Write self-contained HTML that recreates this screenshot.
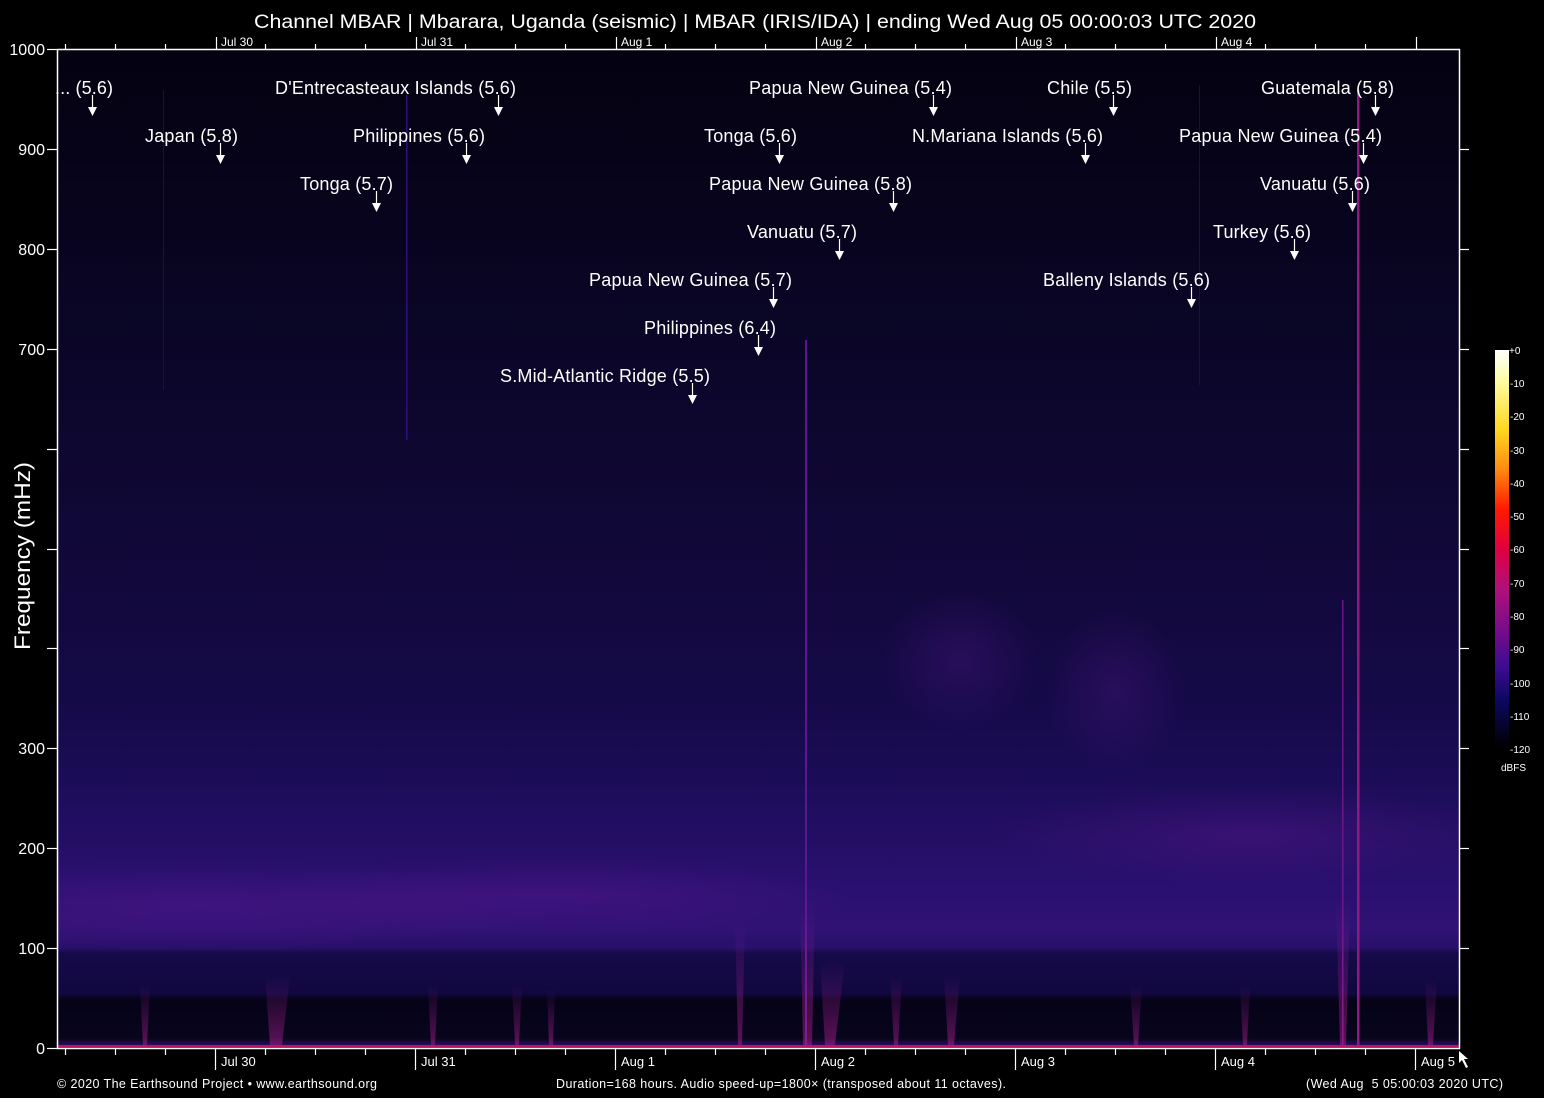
<!DOCTYPE html>
<html><head><meta charset="utf-8"><style>
html,body{margin:0;padding:0;background:#000;}
svg{display:block;}
text{font-family:"Liberation Sans",Arial,sans-serif;fill:#fff;}
</style></head><body>
<svg width="1544" height="1098" viewBox="0 0 1544 1098" xmlns="http://www.w3.org/2000/svg">
<defs>
<clipPath id="pc"><rect x="57" y="49" width="1402" height="999"/></clipPath>
<linearGradient id="bg" x1="0" y1="49" x2="0" y2="1048" gradientUnits="userSpaceOnUse">
<stop offset="0" stop-color="#040210"/>
<stop offset="0.1" stop-color="#060318"/>
<stop offset="0.3" stop-color="#0b0628"/>
<stop offset="0.5" stop-color="#110838"/>
<stop offset="0.65" stop-color="#150a48"/>
<stop offset="0.72" stop-color="#1a0c55"/>
<stop offset="0.78" stop-color="#220e62"/>
<stop offset="0.84" stop-color="#2a1070"/>
<stop offset="0.88" stop-color="#301274"/>
<stop offset="0.9" stop-color="#28106a"/>
<stop offset="0.905" stop-color="#150a48"/>
<stop offset="0.945" stop-color="#120840"/>
<stop offset="0.952" stop-color="#060318"/>
<stop offset="0.99" stop-color="#07041c"/>
<stop offset="1" stop-color="#3a1070"/>
</linearGradient>
<radialGradient id="pb" cx="0.5" cy="0.5" r="0.5">
<stop offset="0" stop-color="#6a1a98" stop-opacity="0.3"/>
<stop offset="1" stop-color="#6a1a98" stop-opacity="0"/>
</radialGradient>
<radialGradient id="blob" cx="0.5" cy="0.5" r="0.5">
<stop offset="0" stop-color="#5a1890" stop-opacity="0.3"/>
<stop offset="1" stop-color="#5a1890" stop-opacity="0"/>
</radialGradient>
<linearGradient id="cb" x1="0" y1="350" x2="0" y2="748" gradientUnits="userSpaceOnUse">
<stop offset="0" stop-color="#ffffff"/>
<stop offset="0.08" stop-color="#fffca0"/>
<stop offset="0.2" stop-color="#ffd820"/>
<stop offset="0.3" stop-color="#ff8a10"/>
<stop offset="0.4" stop-color="#ff1a00"/>
<stop offset="0.5" stop-color="#e00040"/>
<stop offset="0.6" stop-color="#b0107a"/>
<stop offset="0.7" stop-color="#7a0c8a"/>
<stop offset="0.8" stop-color="#3a0c90"/>
<stop offset="0.88" stop-color="#0c0860"/>
<stop offset="1" stop-color="#000000"/>
</linearGradient>
<linearGradient id="sp" x1="0" y1="0" x2="0" y2="1">
<stop offset="0" stop-color="#a020a0" stop-opacity="0"/>
<stop offset="1" stop-color="#b02090" stop-opacity="0.5"/>
</linearGradient>
</defs>

<g clip-path="url(#pc)">
<rect x="57" y="49" width="1402" height="999" fill="url(#bg)"/>
<ellipse cx="200" cy="905" rx="360" ry="45" fill="url(#pb)"/>
<ellipse cx="560" cy="895" rx="300" ry="40" fill="url(#pb)"/>
<ellipse cx="1250" cy="835" rx="260" ry="50" fill="url(#pb)"/>
<ellipse cx="1115" cy="690" rx="70" ry="80" fill="url(#blob)"/>
<ellipse cx="960" cy="660" rx="80" ry="70" fill="url(#blob)"/>

<rect x="163" y="90" width="1" height="300" fill="#1e0a58"/>
<rect x="406" y="95" width="1.5" height="345" fill="#2e1078"/>
<rect x="1199" y="85" width="1" height="300" fill="#1e0a58"/>
<rect x="805" y="340" width="2" height="706" fill="#5a1890"/>
<rect x="1357" y="90" width="2.5" height="956" fill="#901a80"/>
<rect x="1342" y="600" width="1.5" height="446" fill="#6a1888"/>
<g fill="url(#sp)">
<polygon points="140,985 150,985 147,1045 143,1045"/>
<polygon points="265,975 290,975 282,1045 270,1045"/>
<polygon points="428,985 438,985 435,1045 431,1045"/>
<polygon points="512,985 522,985 519,1045 515,1045"/>
<polygon points="547,990 555,990 553,1045 549,1045"/>
<polygon points="735,920 745,920 742,1045 738,1045"/>
<polygon points="800,900 815,900 812,1045 803,1045"/>
<polygon points="820,960 845,960 835,1045 825,1045"/>
<polygon points="890,975 902,975 898,1045 894,1045"/>
<polygon points="944,975 960,975 954,1045 948,1045"/>
<polygon points="1130,985 1142,985 1138,1045 1134,1045"/>
<polygon points="1240,985 1250,985 1247,1045 1243,1045"/>
<polygon points="1336,900 1350,900 1346,1045 1340,1045"/>
<polygon points="1425,980 1437,980 1433,1045 1428,1045"/>
</g>
<rect x="57" y="1045" width="1402" height="2" fill="#c01060"/>
</g>

<g stroke="#fff" stroke-width="1.5" fill="none">
<line x1="57.5" y1="49" x2="57.5" y2="1049"/>
<line x1="1459.5" y1="49" x2="1459.5" y2="1049"/>
<line x1="57" y1="49.5" x2="1460" y2="49.5"/>
<line x1="57" y1="1048.5" x2="1460" y2="1048.5"/>
</g>
<g stroke="#fff" stroke-width="1.2">
<line x1="47" y1="49.5" x2="57" y2="49.5"/><line x1="47" y1="149.5" x2="57" y2="149.5"/>
<line x1="47" y1="249.5" x2="57" y2="249.5"/><line x1="47" y1="349.5" x2="57" y2="349.5"/>
<line x1="47" y1="449.5" x2="57" y2="449.5"/><line x1="47" y1="549.5" x2="57" y2="549.5"/>
<line x1="47" y1="648.5" x2="57" y2="648.5"/><line x1="47" y1="748.5" x2="57" y2="748.5"/>
<line x1="47" y1="848.5" x2="57" y2="848.5"/><line x1="47" y1="948.5" x2="57" y2="948.5"/>
<line x1="47" y1="1048.5" x2="57" y2="1048.5"/>
<line x1="1459" y1="149.5" x2="1469" y2="149.5"/><line x1="1459" y1="249.5" x2="1469" y2="249.5"/>
<line x1="1459" y1="349.5" x2="1469" y2="349.5"/><line x1="1459" y1="449.5" x2="1469" y2="449.5"/>
<line x1="1459" y1="549.5" x2="1469" y2="549.5"/><line x1="1459" y1="648.5" x2="1469" y2="648.5"/>
<line x1="1459" y1="748.5" x2="1469" y2="748.5"/><line x1="1459" y1="848.5" x2="1469" y2="848.5"/>
<line x1="1459" y1="948.5" x2="1469" y2="948.5"/>
</g>
<g stroke="#fff" stroke-width="1.2">
<line x1="65.5" y1="44" x2="65.5" y2="49"/><line x1="115.5" y1="44" x2="115.5" y2="49"/><line x1="165.5" y1="44" x2="165.5" y2="49"/>
<line x1="216.5" y1="37" x2="216.5" y2="49"/><line x1="265.5" y1="44" x2="265.5" y2="49"/><line x1="315.5" y1="44" x2="315.5" y2="49"/><line x1="365.5" y1="44" x2="365.5" y2="49"/>
<line x1="416.5" y1="37" x2="416.5" y2="49"/><line x1="465.5" y1="44" x2="465.5" y2="49"/><line x1="515.5" y1="44" x2="515.5" y2="49"/><line x1="565.5" y1="44" x2="565.5" y2="49"/>
<line x1="616.5" y1="37" x2="616.5" y2="49"/><line x1="665.5" y1="44" x2="665.5" y2="49"/><line x1="715.5" y1="44" x2="715.5" y2="49"/><line x1="765.5" y1="44" x2="765.5" y2="49"/>
<line x1="816.5" y1="37" x2="816.5" y2="49"/><line x1="865.5" y1="44" x2="865.5" y2="49"/><line x1="915.5" y1="44" x2="915.5" y2="49"/><line x1="965.5" y1="44" x2="965.5" y2="49"/>
<line x1="1016.5" y1="37" x2="1016.5" y2="49"/><line x1="1065.5" y1="44" x2="1065.5" y2="49"/><line x1="1115.5" y1="44" x2="1115.5" y2="49"/><line x1="1165.5" y1="44" x2="1165.5" y2="49"/>
<line x1="1216.5" y1="37" x2="1216.5" y2="49"/><line x1="1265.5" y1="44" x2="1265.5" y2="49"/><line x1="1315.5" y1="44" x2="1315.5" y2="49"/><line x1="1365.5" y1="44" x2="1365.5" y2="49"/>
<line x1="1416.5" y1="37" x2="1416.5" y2="49"/>

<line x1="65.5" y1="1049" x2="65.5" y2="1055"/><line x1="115.5" y1="1049" x2="115.5" y2="1055"/><line x1="165.5" y1="1049" x2="165.5" y2="1055"/>
<line x1="215.5" y1="1049" x2="215.5" y2="1070"/><line x1="265.5" y1="1049" x2="265.5" y2="1055"/><line x1="315.5" y1="1049" x2="315.5" y2="1055"/><line x1="365.5" y1="1049" x2="365.5" y2="1055"/>
<line x1="415.5" y1="1049" x2="415.5" y2="1070"/><line x1="465.5" y1="1049" x2="465.5" y2="1055"/><line x1="515.5" y1="1049" x2="515.5" y2="1055"/><line x1="565.5" y1="1049" x2="565.5" y2="1055"/>
<line x1="615.5" y1="1049" x2="615.5" y2="1070"/><line x1="665.5" y1="1049" x2="665.5" y2="1055"/><line x1="715.5" y1="1049" x2="715.5" y2="1055"/><line x1="765.5" y1="1049" x2="765.5" y2="1055"/>
<line x1="815.5" y1="1049" x2="815.5" y2="1070"/><line x1="865.5" y1="1049" x2="865.5" y2="1055"/><line x1="915.5" y1="1049" x2="915.5" y2="1055"/><line x1="965.5" y1="1049" x2="965.5" y2="1055"/>
<line x1="1015.5" y1="1049" x2="1015.5" y2="1070"/><line x1="1065.5" y1="1049" x2="1065.5" y2="1055"/><line x1="1115.5" y1="1049" x2="1115.5" y2="1055"/><line x1="1165.5" y1="1049" x2="1165.5" y2="1055"/>
<line x1="1215.5" y1="1049" x2="1215.5" y2="1070"/><line x1="1265.5" y1="1049" x2="1265.5" y2="1055"/><line x1="1315.5" y1="1049" x2="1315.5" y2="1055"/><line x1="1365.5" y1="1049" x2="1365.5" y2="1055"/>
<line x1="1415.5" y1="1049" x2="1415.5" y2="1070"/>
</g>
<polygon points="1459,1051 1459,1063 1462,1060 1466,1068 1468,1067 1464,1059 1468,1059" fill="#fff"/>

<text x="755" y="28" font-size="19" text-anchor="middle" textLength="1002" lengthAdjust="spacingAndGlyphs">Channel MBAR | Mbarara, Uganda (seismic) | MBAR (IRIS/IDA) | ending Wed Aug 05 00:00:03 UTC 2020</text>

<g font-size="12" xml:space="preserve">
<text x="221" y="46">Jul 30</text><text x="421" y="46">Jul 31</text><text x="621" y="46">Aug  1</text>
<text x="821" y="46">Aug  2</text><text x="1021" y="46">Aug  3</text><text x="1221" y="46">Aug  4</text>
</g>
<g font-size="13" xml:space="preserve">
<text x="221" y="1066">Jul 30</text><text x="421" y="1066">Jul 31</text><text x="621" y="1066">Aug  1</text>
<text x="821" y="1066">Aug  2</text><text x="1021" y="1066">Aug  3</text><text x="1221" y="1066">Aug  4</text><text x="1421" y="1066">Aug  5</text>
</g>

<g font-size="16" text-anchor="end">
<text x="45" y="55">1000</text><text x="45" y="155">900</text><text x="45" y="255">800</text><text x="45" y="355">700</text>
<text x="45" y="754">300</text><text x="45" y="854">200</text><text x="45" y="954">100</text><text x="45" y="1054">0</text>
</g>
<text transform="translate(30,556) rotate(-90)" font-size="22" text-anchor="middle" textLength="188" lengthAdjust="spacingAndGlyphs">Frequency (mHz)</text>

<g font-size="18">
<text x="55" y="94" textLength="58">... (5.6)</text>
<text x="275" y="94" textLength="241">D'Entrecasteaux Islands (5.6)</text>
<text x="749" y="94" textLength="203">Papua New Guinea (5.4)</text>
<text x="1047" y="94" textLength="85">Chile (5.5)</text>
<text x="1261" y="94" textLength="133">Guatemala (5.8)</text>
<text x="145" y="142" textLength="93">Japan (5.8)</text>
<text x="353" y="142" textLength="132">Philippines (5.6)</text>
<text x="704" y="142" textLength="93">Tonga (5.6)</text>
<text x="912" y="142" textLength="191">N.Mariana Islands (5.6)</text>
<text x="1179" y="142" textLength="203">Papua New Guinea (5.4)</text>
<text x="300" y="190" textLength="93">Tonga (5.7)</text>
<text x="709" y="190" textLength="203">Papua New Guinea (5.8)</text>
<text x="1260" y="190" textLength="110">Vanuatu (5.6)</text>
<text x="747" y="238" textLength="110">Vanuatu (5.7)</text>
<text x="1213" y="238" textLength="98">Turkey (5.6)</text>
<text x="589" y="286" textLength="203">Papua New Guinea (5.7)</text>
<text x="1043" y="286" textLength="167">Balleny Islands (5.6)</text>
<text x="644" y="334" textLength="132">Philippines (6.4)</text>
<text x="500" y="382" textLength="210">S.Mid-Atlantic Ridge (5.5)</text>
</g>
<g fill="#fff" stroke="#fff" stroke-width="1.2">
<path d="M92.5 95V107"/><polygon stroke="none" points="88,107 97,107 92.5,116"/>
<path d="M498.5 95V107"/><polygon stroke="none" points="494,107 503,107 498.5,116"/>
<path d="M933.5 95V107"/><polygon stroke="none" points="929,107 938,107 933.5,116"/>
<path d="M1113.5 95V107"/><polygon stroke="none" points="1109,107 1118,107 1113.5,116"/>
<path d="M1375.5 95V107"/><polygon stroke="none" points="1371,107 1380,107 1375.5,116"/>
<path d="M220.5 143V155"/><polygon stroke="none" points="216,155 225,155 220.5,164"/>
<path d="M466.5 143V155"/><polygon stroke="none" points="462,155 471,155 466.5,164"/>
<path d="M779.5 143V155"/><polygon stroke="none" points="775,155 784,155 779.5,164"/>
<path d="M1085.5 143V155"/><polygon stroke="none" points="1081,155 1090,155 1085.5,164"/>
<path d="M1363.5 143V155"/><polygon stroke="none" points="1359,155 1368,155 1363.5,164"/>
<path d="M376.5 191V203"/><polygon stroke="none" points="372,203 381,203 376.5,212"/>
<path d="M893.5 191V203"/><polygon stroke="none" points="889,203 898,203 893.5,212"/>
<path d="M1352.5 191V203"/><polygon stroke="none" points="1348,203 1357,203 1352.5,212"/>
<path d="M839.5 239V251"/><polygon stroke="none" points="835,251 844,251 839.5,260"/>
<path d="M1294.5 239V251"/><polygon stroke="none" points="1290,251 1299,251 1294.5,260"/>
<path d="M773.5 287V299"/><polygon stroke="none" points="769,299 778,299 773.5,308"/>
<path d="M1191.5 287V299"/><polygon stroke="none" points="1187,299 1196,299 1191.5,308"/>
<path d="M758.5 335V347"/><polygon stroke="none" points="754,347 763,347 758.5,356"/>
<path d="M692.5 383V395"/><polygon stroke="none" points="688,395 697,395 692.5,404"/>
</g>

<rect x="1495" y="350" width="14" height="398" fill="url(#cb)"/>
<g font-size="10" fill="#ddd">
<text x="1509" y="354">+0</text><text x="1510" y="387">-10</text><text x="1510" y="420">-20</text>
<text x="1510" y="454">-30</text><text x="1510" y="487">-40</text><text x="1510" y="520">-50</text>
<text x="1510" y="553">-60</text><text x="1510" y="587">-70</text><text x="1510" y="620">-80</text>
<text x="1510" y="653">-90</text><text x="1510" y="687">-100</text><text x="1510" y="720">-110</text>
<text x="1510" y="753">-120</text><text x="1501" y="771">dBFS</text>
</g>

<g font-size="12.5">
<text x="57" y="1088" textLength="320">© 2020 The Earthsound Project • www.earthsound.org</text>
<text x="556" y="1088" textLength="450">Duration=168 hours. Audio speed-up=1800× (transposed about 11 octaves).</text>
<text x="1306" y="1088" textLength="197" xml:space="preserve">(Wed Aug  5 05:00:03 2020 UTC)</text>
</g>
</svg>
</body></html>
